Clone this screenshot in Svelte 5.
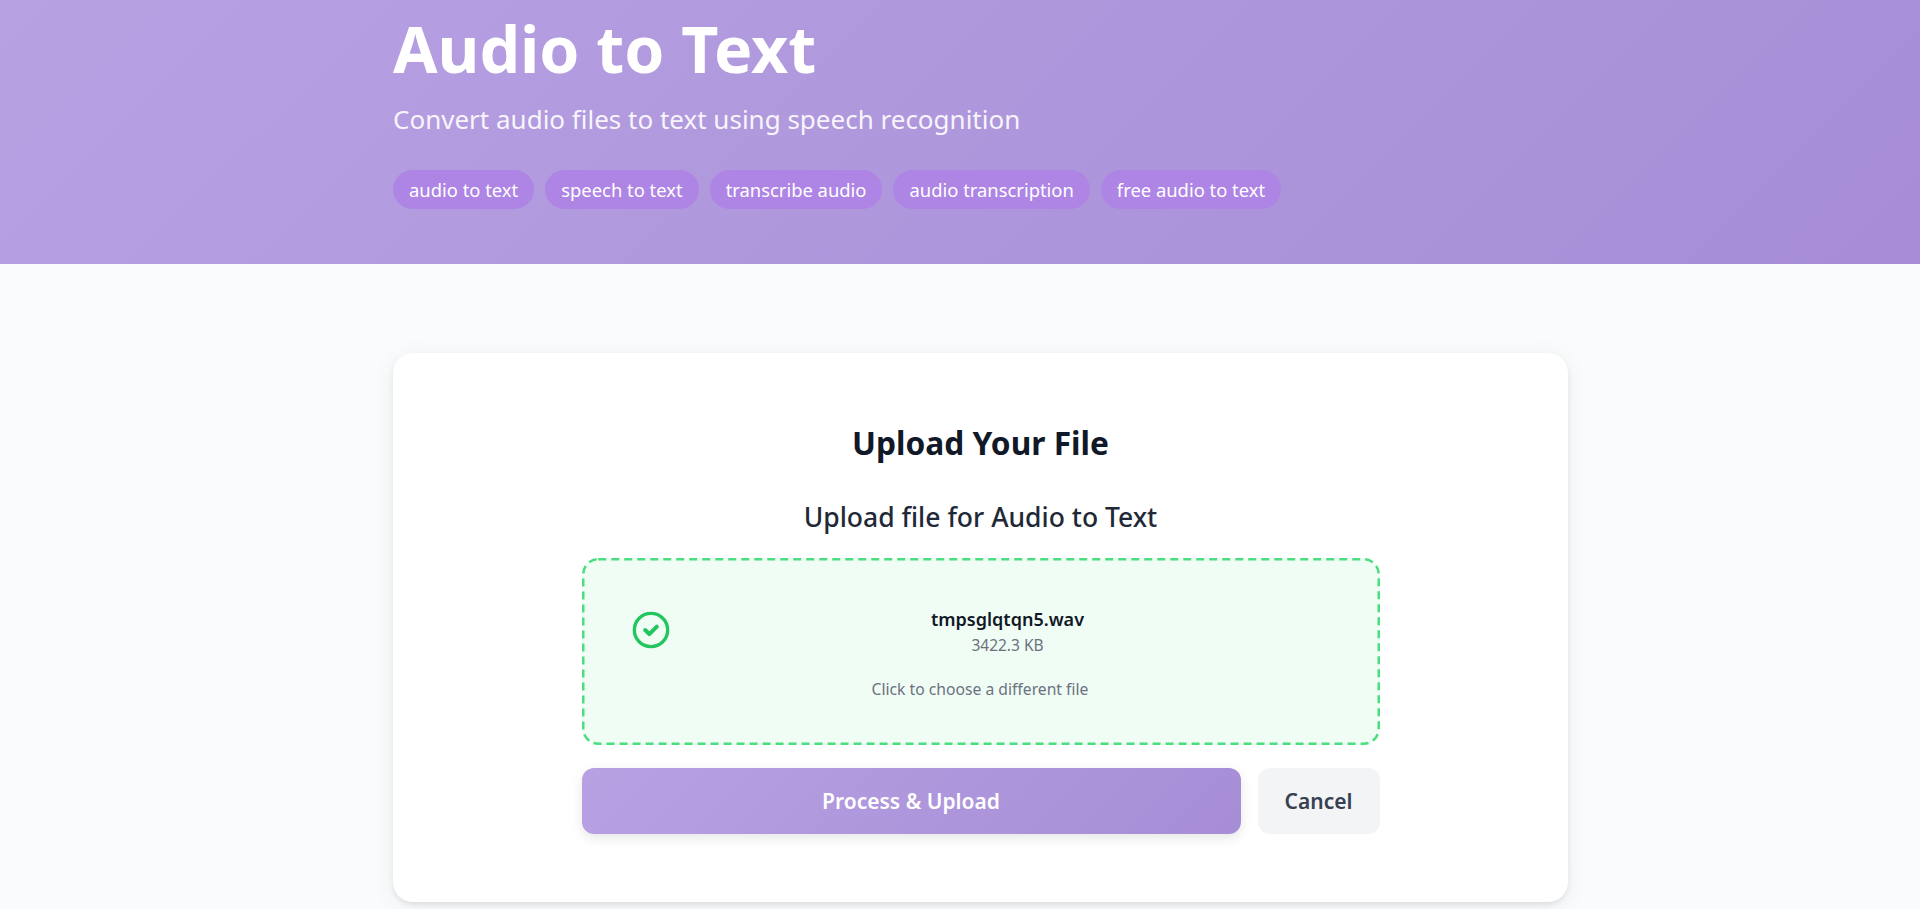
<script>
  const tags = ['audio to text', 'speech to text', 'transcribe audio', 'audio transcription', 'free audio to text'];
</script>

<div class="page">
  <header class="hero">
    <div class="hero-inner">
      <h1>Audio to Text</h1>
      <p class="subtitle">Convert audio files to text using speech recognition</p>
      <div class="tags">
        {#each tags as tag}
          <span class="tag">{tag}</span>
        {/each}
      </div>
    </div>
  </header>

  <main class="content">
    <section class="card">
      <h2>Upload Your File</h2>
      <h3>Upload file for Audio to Text</h3>
      <div class="uploader">
        <div class="dropzone">
          <!-- svg outline: the dash is 2.5px thick, css borders snap to whole pixels -->
          <svg class="outline" width="798" height="187" aria-hidden="true">
            <rect x="1.25" y="1.25" width="795.5" height="184.5" rx="15" fill="none" stroke="#4ade80" stroke-width="2.5" stroke-dasharray="8 5"></rect>
          </svg>
          <div class="file-row">
            <svg class="check" viewBox="0 0 24 24" fill="none" stroke="currentColor" stroke-width="2" stroke-linecap="round" stroke-linejoin="round">
              <circle cx="12" cy="12" r="10"></circle>
              <path d="m8.5 12 2.5 2.5 4.5-4.5" stroke-width="2.4"></path>
            </svg>
            <div class="file-info">
              <p class="file-name">tmpsglqtqn5.wav</p>
              <p class="file-size">3422.3 KB</p>
            </div>
          </div>
          <p class="file-hint">Click to choose a different file</p>
        </div>
        <div class="actions">
          <button class="primary">Process &amp; Upload</button>
          <button class="secondary">Cancel</button>
        </div>
      </div>
    </section>
  </main>
</div>

<style>
  :global(body) {
    margin: 0;
    background: #fafbfc;
    font-family: "Noto Sans", "Open Sans", sans-serif;
  }

  .page {
    height: 909px;
    overflow: hidden;
    padding-left: 393px;
    box-sizing: border-box;
  }

  .hero {
    height: 264px;
    margin-left: -393px;
    padding-left: 393px;
    background: linear-gradient(135deg, #b8a1e3, #a68dd6);
    color: #fff;
  }

  .hero-inner {
    padding-top: 8px;
  }

  h1 {
    margin: 0;
    font-size: 64.4px;
    line-height: 80px;
    font-weight: 700;
  }

  .subtitle {
    margin: 14px 0 0;
    font-size: 26px;
    line-height: 34px;
    opacity: 0.9;
  }

  .tags {
    display: flex;
    gap: 11px;
    margin-top: 34px;
  }

  .tag {
    padding: 0 16px;
    line-height: 39px;
    font-size: 18.4px;
    background: #ae84e4;
    border-radius: 20px;
  }

  .content {
    width: 1175px;
    padding-top: 89px;
  }

  .card {
    height: 549px;
    box-sizing: border-box;
    padding-top: 70px;
    background: #fff;
    border-radius: 20px;
    box-shadow: 0 3px 6px -1px rgba(0, 0, 0, 0.1), 0 4px 24px rgba(0, 0, 0, 0.06);
    text-align: center;
  }

  h2 {
    margin: 0;
    font-size: 31.7px;
    line-height: 40px;
    font-weight: 700;
    color: #111827;
  }

  h3 {
    margin: 37px 0 0;
    font-size: 26.5px;
    line-height: 34px;
    font-weight: 500;
    color: #1f2937;
  }

  .uploader {
    width: 798px;
    margin: 24px auto 0;
  }

  .dropzone {
    position: relative;
    height: 187px;
    box-sizing: border-box;
    padding: 49px 50px 0 49px;
    background: #f0fdf4;
    border-radius: 16px;
  }

  .outline {
    position: absolute;
    top: 0;
    left: 0;
  }

  .file-row {
    display: flex;
    align-items: flex-start;
  }

  .check {
    width: 40px;
    height: 40px;
    flex: none;
    margin-top: 3px;
    color: #22c55e;
  }

  .file-info {
    flex: 1;
    padding-left: 15px;
  }

  .dropzone p {
    margin: 0;
  }

  .file-name {
    font-size: 18px;
    line-height: 24px;
    font-weight: 600;
    color: #111827;
  }

  .dropzone .file-size {
    font-size: 15.5px;
    line-height: 20px;
    color: #6b7280;
    margin-top: 4px;
  }

  .dropzone .file-hint {
    font-size: 15.7px;
    line-height: 20px;
    color: #6b7280;
    margin-top: 24px;
  }

  .actions {
    display: flex;
    gap: 17px;
    margin-top: 23px;
  }

  button {
    height: 66px;
    border: none;
    font: inherit;
    font-size: 21px;
    font-weight: 600;
    border-radius: 12px;
  }

  .primary {
    flex: 1;
    color: #fff;
    background: linear-gradient(135deg, #b8a1e3, #a68dd6);
    box-shadow: 0 4px 12px rgba(0, 0, 0, 0.1);
  }

  .secondary {
    width: 122px;
    flex: none;
    color: #374151;
    background: #f3f4f6;
  }
</style>
